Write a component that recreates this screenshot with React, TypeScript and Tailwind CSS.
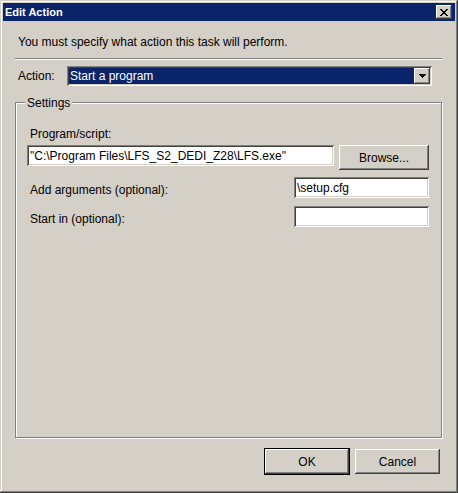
import type { ReactNode } from 'react'

const raised =
  'bg-[#d4d0c8] shadow-[inset_-1px_-1px_#404040,inset_1px_1px_#ffffff,inset_-2px_-2px_#808080,inset_2px_2px_#d4d0c8]'
const sunken =
  'bg-white shadow-[inset_1px_1px_#808080,inset_-1px_-1px_#ffffff,inset_2px_2px_#404040,inset_-2px_-2px_#d4d0c8]'

function Button({ children, isDefault }: { children: ReactNode; isDefault?: boolean }) {
  return (
    <div
      className={`flex items-center justify-center h-[25px] pt-[1px] ${raised} ${
        isDefault ? 'outline outline-1 outline-black' : ''
      }`}
    >
      {children}
    </div>
  )
}

function TextBox({ value, className }: { value?: string; className: string }) {
  return (
    <div className={`${sunken} h-[21px] flex items-center pl-[3px] pt-[1px] ${className}`}>
      {value}
    </div>
  )
}

export default function App() {
  return (
    <div
      className="w-[458px] h-[493px] bg-[#d4d0c8] p-[3px] flex flex-col text-[12px] leading-[15px] text-black shadow-[inset_-1px_-1px_#404040,inset_1px_1px_#d4d0c8,inset_-2px_-2px_#808080,inset_2px_2px_#ffffff]"
      style={{ fontFamily: '"Liberation Sans", Arial, sans-serif' }}
    >
      {/* title bar */}
      <div className="h-[18px] bg-[#0a246a] flex items-center justify-between pl-[2px] pr-[3px]">
        <span className="text-white font-bold text-[11px]">Edit Action</span>
        <div className={`w-[16px] h-[14px] flex items-center justify-center ${raised}`}>
          <svg width="8" height="7" viewBox="0 0 8 7" shapeRendering="crispEdges">
            <path
              d="M0 0h2v1h-2zM6 0h2v1h-2zM1 1h2v1h-2zM5 1h2v1h-2zM2 2h4v1h-4zM3 3h2v1h-2zM2 4h4v1h-4zM1 5h2v1h-2zM5 5h2v1h-2zM0 6h2v1h-2zM6 6h2v1h-2z"
              fill="#000"
            />
          </svg>
        </div>
      </div>

      <div className="flex flex-col pl-[12px] pr-[13px]">
        <p className="mt-[14px] pl-[3px]">You must specify what action this task will perform.</p>

        <div className="mt-[8px] h-[2px] border-t border-[#808080] border-b border-b-white" />

        {/* action row */}
        <div className="mt-[6px] flex items-center">
          <span className="w-[52px] pl-[3px] pt-[1px]">Action:</span>
          <div className={`${sunken} bg-white w-[365px] h-[20px] flex items-center p-[2px]`}>
            <div className="flex-1 h-full bg-[#0a246a] text-white flex items-center pl-[1px] pt-[1px]">
              Start a program
            </div>
            <div className={`w-[16px] h-full flex items-center justify-center ${raised}`}>
              <svg width="7" height="4" viewBox="0 0 7 4" shapeRendering="crispEdges">
                <path d="M0 0h7v1h-7zM1 1h5v1h-5zM2 2h3v1h-3zM3 3h1v1h-1z" fill="#000" />
              </svg>
            </div>
          </div>
        </div>

        {/* settings group */}
        <div className="relative mt-[16px] h-[336px] border border-[#808080] shadow-[1px_1px_#ffffff,inset_1px_1px_#ffffff] pl-[11px] pr-[12px]">
          <span className="absolute left-[9px] top-[-7px] bg-[#d4d0c8] px-[2px]">Settings</span>

          <p className="mt-[24px] pl-[3px]">Program/script:</p>
          <div className="mt-[3px] flex items-start justify-between">
            <TextBox value={'"C:\\Program Files\\LFS_S2_DEDI_Z28\\LFS.exe"'} className="w-[307px]" />
            <div className="w-[90px]">
              <Button>Browse...</Button>
            </div>
          </div>

          <div className="mt-[7px] flex items-center justify-between">
            <span className="pl-[3px] pt-[5px]">Add arguments (optional):</span>
            <TextBox value="\setup.cfg" className="w-[135px]" />
          </div>

          <div className="mt-[8px] flex items-center justify-between">
            <span className="pl-[3px] pt-[5px]">Start in (optional):</span>
            <TextBox className="w-[135px]" />
          </div>
        </div>

        {/* buttons */}
        <div className="mt-[11px] flex justify-end gap-[6px] pr-[2px]">
          <div className="w-[84px]">
            <Button isDefault>OK</Button>
          </div>
          <div className="w-[85px]">
            <Button>Cancel</Button>
          </div>
        </div>
      </div>
    </div>
  )
}
